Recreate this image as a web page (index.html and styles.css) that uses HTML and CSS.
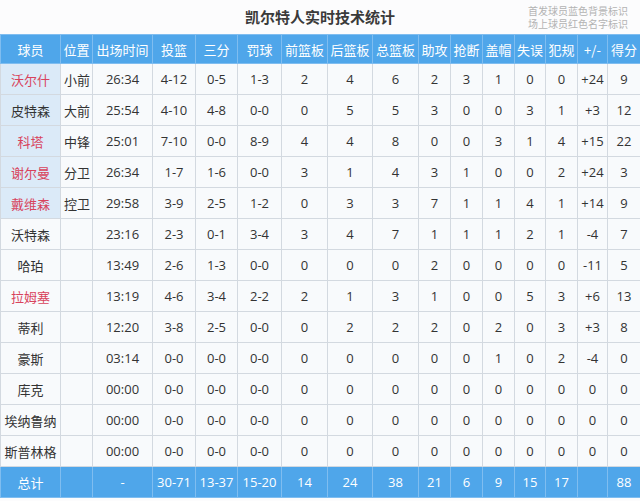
FILE: index.html
```html
<!DOCTYPE html>
<html lang="zh-CN">
<head>
<meta charset="utf-8">
<title>凯尔特人实时技术统计</title>
<link rel="stylesheet" href="styles.css">
</head>
<body>
<div class="page">
  <header class="top">
    <div class="spacer"></div>
    <h1 class="title">凯尔特人实时技术统计</h1>
    <div class="note">
      <div class="note-line">首发球员蓝色背景标识</div>
      <div class="note-line">场上球员红色名字标识</div>
    </div>
  </header>
  <table class="stats">
    <colgroup>
      <col style="width:60px"><col style="width:32px"><col style="width:60px"><col style="width:43px">
      <col style="width:42px"><col style="width:44px"><col style="width:46px"><col style="width:45px">
      <col style="width:46px"><col style="width:32px"><col style="width:32px"><col style="width:32px">
      <col style="width:31px"><col style="width:32px"><col style="width:30px"><col style="width:33px">
    </colgroup>
    <thead>
      <tr><th>球员</th><th>位置</th><th>出场时间</th><th>投篮</th><th>三分</th><th>罚球</th><th>前篮板</th><th>后篮板</th><th>总篮板</th><th>助攻</th><th>抢断</th><th>盖帽</th><th>失误</th><th>犯规</th><th>+/-</th><th>得分</th></tr>
    </thead>
    <tbody>
      <tr><td class="name starter oncourt">沃尔什</td><td class="pos">小前</td><td>26:34</td><td>4-12</td><td>0-5</td><td>1-3</td><td>2</td><td>4</td><td>6</td><td>2</td><td>3</td><td>1</td><td>0</td><td>0</td><td>+24</td><td>9</td></tr>
      <tr><td class="name starter">皮特森</td><td class="pos">大前</td><td>25:54</td><td>4-10</td><td>4-8</td><td>0-0</td><td>0</td><td>5</td><td>5</td><td>3</td><td>0</td><td>0</td><td>3</td><td>1</td><td>+3</td><td>12</td></tr>
      <tr><td class="name starter oncourt">科塔</td><td class="pos">中锋</td><td>25:01</td><td>7-10</td><td>0-0</td><td>8-9</td><td>4</td><td>4</td><td>8</td><td>0</td><td>0</td><td>3</td><td>1</td><td>4</td><td>+15</td><td>22</td></tr>
      <tr><td class="name starter oncourt">谢尔曼</td><td class="pos">分卫</td><td>26:34</td><td>1-7</td><td>1-6</td><td>0-0</td><td>3</td><td>1</td><td>4</td><td>3</td><td>1</td><td>0</td><td>0</td><td>2</td><td>+24</td><td>3</td></tr>
      <tr><td class="name starter oncourt">戴维森</td><td class="pos">控卫</td><td>29:58</td><td>3-9</td><td>2-5</td><td>1-2</td><td>0</td><td>3</td><td>3</td><td>7</td><td>1</td><td>1</td><td>4</td><td>1</td><td>+14</td><td>9</td></tr>
      <tr><td class="name">沃特森</td><td class="pos"></td><td>23:16</td><td>2-3</td><td>0-1</td><td>3-4</td><td>3</td><td>4</td><td>7</td><td>1</td><td>1</td><td>1</td><td>2</td><td>1</td><td>-4</td><td>7</td></tr>
      <tr><td class="name">哈珀</td><td class="pos"></td><td>13:49</td><td>2-6</td><td>1-3</td><td>0-0</td><td>0</td><td>0</td><td>0</td><td>2</td><td>0</td><td>0</td><td>0</td><td>0</td><td>-11</td><td>5</td></tr>
      <tr><td class="name oncourt">拉姆塞</td><td class="pos"></td><td>13:19</td><td>4-6</td><td>3-4</td><td>2-2</td><td>2</td><td>1</td><td>3</td><td>1</td><td>0</td><td>0</td><td>5</td><td>3</td><td>+6</td><td>13</td></tr>
      <tr><td class="name">蒂利</td><td class="pos"></td><td>12:20</td><td>3-8</td><td>2-5</td><td>0-0</td><td>0</td><td>2</td><td>2</td><td>2</td><td>0</td><td>2</td><td>0</td><td>3</td><td>+3</td><td>8</td></tr>
      <tr><td class="name">豪斯</td><td class="pos"></td><td>03:14</td><td>0-0</td><td>0-0</td><td>0-0</td><td>0</td><td>0</td><td>0</td><td>0</td><td>0</td><td>1</td><td>0</td><td>2</td><td>-4</td><td>0</td></tr>
      <tr><td class="name">库克</td><td class="pos"></td><td>00:00</td><td>0-0</td><td>0-0</td><td>0-0</td><td>0</td><td>0</td><td>0</td><td>0</td><td>0</td><td>0</td><td>0</td><td>0</td><td>0</td><td>0</td></tr>
      <tr><td class="name">埃纳鲁纳</td><td class="pos"></td><td>00:00</td><td>0-0</td><td>0-0</td><td>0-0</td><td>0</td><td>0</td><td>0</td><td>0</td><td>0</td><td>0</td><td>0</td><td>0</td><td>0</td><td>0</td></tr>
      <tr><td class="name">斯普林格</td><td class="pos"></td><td>00:00</td><td>0-0</td><td>0-0</td><td>0-0</td><td>0</td><td>0</td><td>0</td><td>0</td><td>0</td><td>0</td><td>0</td><td>0</td><td>0</td><td>0</td></tr>
    </tbody>
    <tfoot>
      <tr><td class="name">总计</td><td></td><td>-</td><td>30-71</td><td>13-37</td><td>15-20</td><td>14</td><td>24</td><td>38</td><td>21</td><td>6</td><td>9</td><td>15</td><td>17</td><td></td><td>88</td></tr>
    </tfoot>
  </table>
</div>
</body>
</html>
```
FILE: styles.css
```css
* { box-sizing: border-box; }
html, body { margin: 0; padding: 0; background: #ffffff; }
body {
  font-family: "Open Sans", "Noto Sans CJK SC", sans-serif;
  color: #333333;
}
.page {
  width: 640px;
  height: 501px;
  background: #fcfcfd;
  overflow: hidden;
}
.top {
  height: 34px;
  display: grid;
  grid-template-columns: 1fr auto 1fr;
  align-items: start;
}
.title {
  margin: 0;
  padding-top: 6px;
  font-family: "Noto Sans CJK SC", sans-serif;
  font-size: 15px;
  line-height: 22px;
  font-weight: 700;
  color: #3a3a3a;
}
.note {
  justify-self: end;
  padding: 6px 12px 0 0;
  font-family: "Liberation Sans", "Noto Sans CJK SC", sans-serif;
  font-size: 10px;
  line-height: 12.5px;
  color: #b3b3b3;
}
.note-line {
  height: 12.5px;
}
.stats {
  width: 640px;
  table-layout: fixed;
  border-collapse: collapse;
  font-size: 13px;
}
.stats th, .stats td {
  padding: 0;
  text-align: center;
  white-space: nowrap;
  overflow: hidden;
  border: 1px solid #d3d9e0;
}
.stats thead th {
  height: 29px;
  background: #4fa6ea;
  color: #ffffff;
  font-family: "Noto Sans CJK SC", sans-serif;
  font-weight: 400;
  border-color: #7fbdf0;
}
.stats tbody td {
  height: 31px;
  background: #f8fafc;
  color: #333333;
}
.stats td.name, .stats td.pos {
  font-family: "Noto Sans CJK SC", sans-serif;
}
.stats td.pos { text-align: left; padding-left: 3px; }
.stats tbody td.starter { background: #dbeaf8; }
.stats td.oncourt { color: #d8435c; }
.stats tfoot td {
  height: 31px;
  background: #4fa6ea;
  color: #ffffff;
  border-color: #7fbdf0;
}
.stats tfoot td.name { font-family: "Noto Sans CJK SC", sans-serif; }
```
